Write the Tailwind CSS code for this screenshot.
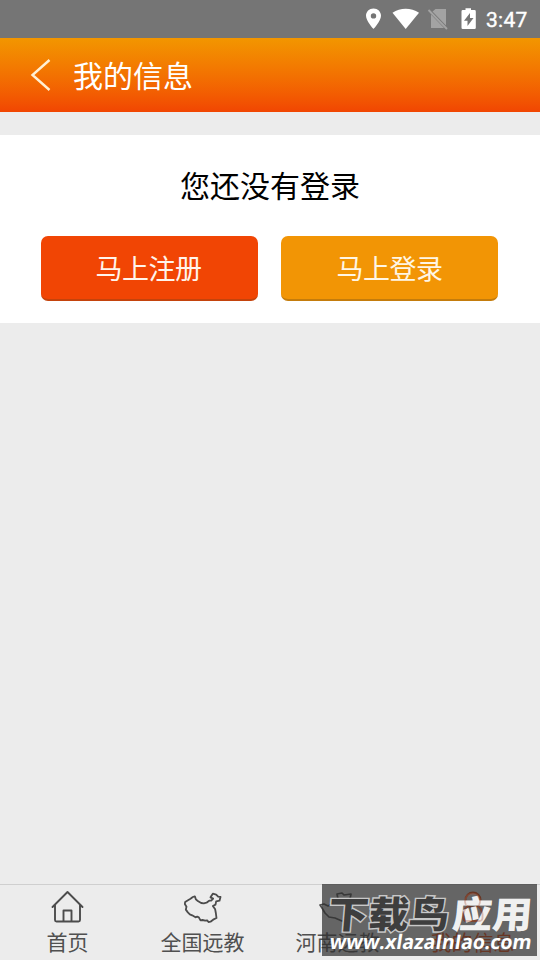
<!DOCTYPE html>
<html lang="zh-CN">
<head>
<meta charset="utf-8">
<title>我的信息</title>
<script src="https://cdn.jsdelivr.net/npm/@tailwindcss/browser@4"></script>
</head>
<body class="relative flex h-[960px] w-[540px] flex-col overflow-hidden bg-[#ececec] font-['Noto_Sans_CJK_SC',sans-serif]">
<div class="flex h-[37.500px] shrink-0 items-center justify-end bg-[#757575] pr-[12px] text-white">
  <svg class="h-[37px] w-[118px]" viewBox="0 0 118 37" fill="#fff">
    <g transform="translate(-5 0)">
    <path fill-rule="evenodd" d="M13.500 8.500c-4.300 0-7.500 3.200-7.500 7.300 0 5.300 7.500 13.200 7.500 13.200s7.500-7.900 7.500-13.200c0-4.100-3.200-7.300-7.500-7.300zm0 4.700a2.700 2.700 0 1 1 0 5.400 2.700 2.700 0 0 1 0-5.400z"/>
    <path d="M32.500 12.700C40.300 7.300 51 7.300 59 12.700L45.700 29z"/>
    <path fill="#a3a3a3" d="M75.500 9H86v16.500L72.500 11.500zM71 14.500 84 28H71z"/>
    <path stroke="#a3a3a3" stroke-width="1.800" d="M68.500 10l18.500 19"/>
    </g>
    <path fill-rule="evenodd" d="M100.500 8.300h5.500v1.800h3.500q1.300 0 1.300 1.300v16.300q0 1.300-1.300 1.300H97.800q-1.300 0-1.300-1.300V11.400q0-1.300 1.300-1.300h2.700zM105 13l-6 7.700h3.500v5.300l6-8H105z"/>
  </svg>
  <span class="ml-[3px] w-[42px] pt-[3px] font-[Roboto,sans-serif] text-[21px] font-normal leading-none tracking-[0.300px] whitespace-nowrap [-webkit-text-stroke:0.400px_white]">3:47</span>
</div>
<header class="flex h-[74.500px] shrink-0 items-center bg-linear-to-b from-[#f29600] to-[#f14502] pl-[30px] text-white">
  <svg class="h-[34px] w-[22px]" viewBox="0 0 22 34" fill="none" stroke="#fff0d4" stroke-width="2.400"><path d="M19.500 2 2.500 17l17 15"/></svg>
  <h1 class="ml-[21px] pb-[1px] text-[30px] leading-[44px]">我的信息</h1>
</header>
<main class="mt-[23px] h-[188px] shrink-0 bg-white px-[41px] pt-[27px] text-center">
  <p class="text-[30px] leading-[44px] text-black">您还没有登录</p>
  <div class="mt-[29.500px] flex gap-[23px]">
    <button class="h-[65px] w-[217px] rounded-[7px] border-b-2 border-[#c4430c] bg-[#f14504] pr-[2px] text-[27px] leading-[63px] tracking-[-0.500px] text-[#fff4ec]">马上注册</button>
    <button class="h-[65px] w-[217px] rounded-[7px] border-b-2 border-[#c47c0c] bg-[#f29505] text-[27px] leading-[63px] tracking-[-0.500px] text-[#fff6e5]">马上登录</button>
  </div>
</main>
<nav class="mt-auto grid h-[76px] shrink-0 grid-cols-4 border-t border-[#cfcfcf] text-[#505050]">
  <div class="flex flex-col items-center pt-[4px]">
    <svg class="h-[36px] w-[40px]" viewBox="0.500 -0.500 40 36" fill="none" stroke="#4c4c4c" stroke-width="1.900" stroke-linejoin="round" stroke-linecap="round"><path d="M5 17.500 20 2.500 35 17.500M7.500 15.500v15q0 1.500 1.500 1.500h22q1.500 0 1.500-1.500v-15M16 31.500V21h8v10.500"/></svg>
    <span class="text-[21px] leading-[32px]">首页</span>
  </div>
  <div class="flex flex-col items-center pt-[4px]">
    <svg class="h-[36px] w-[40px]" viewBox="7.500 3 120 108" fill="none" stroke="#4c4c4c" stroke-width="5.500" stroke-linejoin="round"><path d="M14 42 20 38 30 32 37 27 43 25 46 34 52 39 62 45 70 46 78 44 86 38 92 38 98 32 90 28 97 17 107 20 113 26 120 27 117 38 107 40 105 50 97 54 104 64 106 75 108 90 98 95 90 101 84 102 80 97 74 98 66 96 60 97 55 88 50 86 45 88 35 82 28 79 22 73 16 65 18 56 13 48z"/></svg>
    <span class="text-[21px] leading-[32px]">全国远教</span>
  </div>
  <div class="flex flex-col items-center pt-[4px]">
    <svg class="h-[36px] w-[40px]" viewBox="0 0 40 36" fill="none" stroke="#4c4c4c" stroke-width="1.700" stroke-linejoin="round"><path d="M19 5l5-1 2 2 7-1-1 5-4 4 2 5 5 3-3 5-3 4-5 1-7-3-6-1-4-4-3-5-2-3 4-1 4 2 6-3 4-4z"/></svg>
    <span class="text-[21px] leading-[32px]">河南远教</span>
  </div>
  <div class="flex flex-col items-center pt-[4px] text-[#f14504]">
    <svg class="h-[36px] w-[40px]" viewBox="0 0 40 36" fill="none" stroke="#f14504" stroke-width="2"><circle cx="20" cy="11" r="7.500"/><path d="M15 17c-4 3-5 8-4.500 12q.3 3 3 3h13q2.700 0 3-3c.5-4-.5-9-4.500-12"/></svg>
    <span class="text-[21px] leading-[32px]">我的信息</span>
  </div>
</nav>
<div class="absolute left-[322px] top-[884px] h-[72px] w-[215px] bg-[#303030]/72">
  <svg class="h-[72px] w-[215px]" viewBox="0 0 215 72">
    <g font-family="'Noto Sans CJK SC', sans-serif" font-weight="900" font-size="37" transform="skewX(-5)">
      <text x="9" y="44" textLength="121" lengthAdjust="spacingAndGlyphs" fill="#3e3e3e" stroke="#c8c8c8" stroke-width="2.800" paint-order="stroke">下载鸟</text>
      <text x="133" y="44" textLength="80" lengthAdjust="spacingAndGlyphs" fill="#fff" fill-opacity="0.930">应用</text>
    </g>
    <path d="M144 21a7.500 7.500 0 1 1 13 0M146 22c-4 3-5 8-4.500 12q.3 3 3 3h13q2.700 0 3-3c.5-4-.5-9-4.500-12" fill="none" stroke="#b0604a" stroke-width="1.800" stroke-opacity="0.350"/>
    <text transform="skewX(-9)" x="17" y="65" textLength="202" lengthAdjust="spacingAndGlyphs" font-family="'Open Sans', sans-serif" font-weight="700" font-size="20" fill="#fff">www.xlazaInIao.com</text>
  </svg>
</div>
</body>
</html>
